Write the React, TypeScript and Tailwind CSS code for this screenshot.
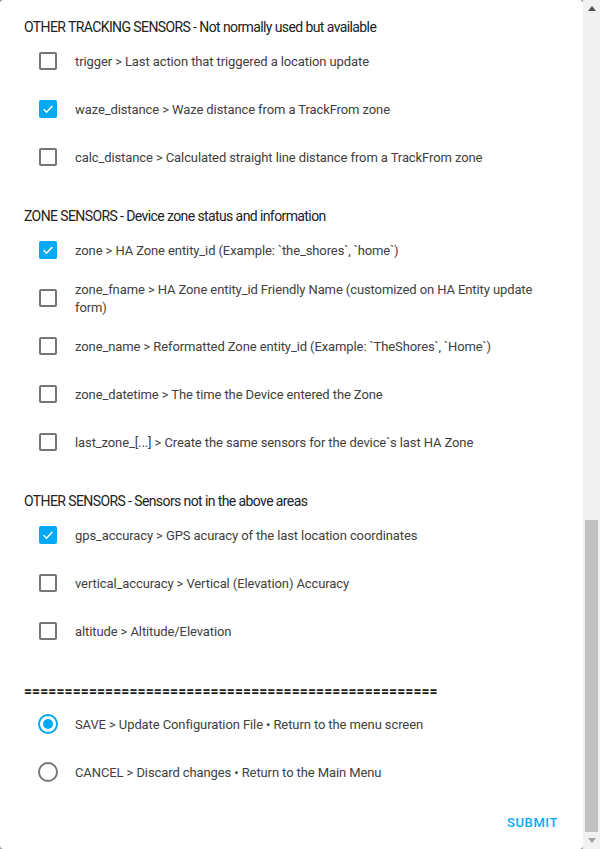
import React from 'react';

type Item = { label: string; checked?: boolean };

const sections: { title: string; items: Item[] }[] = [
  {
    title: 'OTHER TRACKING SENSORS - Not normally used but available',
    items: [
      { label: 'trigger > Last action that triggered a location update' },
      { label: 'waze_distance > Waze distance from a TrackFrom zone', checked: true },
      { label: 'calc_distance > Calculated straight line distance from a TrackFrom zone' },
    ],
  },
  {
    title: 'ZONE SENSORS - Device zone status and information',
    items: [
      { label: 'zone > HA Zone entity_id (Example: `the_shores`, `home`)', checked: true },
      { label: 'zone_fname > HA Zone entity_id Friendly Name (customized on HA Entity update form)' },
      { label: 'zone_name > Reformatted Zone entity_id (Example: `TheShores`, `Home`)' },
      { label: 'zone_datetime > The time the Device entered the Zone' },
      { label: 'last_zone_[...] > Create the same sensors for the device`s last HA Zone' },
    ],
  },
  {
    title: 'OTHER SENSORS - Sensors not in the above areas',
    items: [
      { label: 'gps_accuracy > GPS acuracy of the last location coordinates', checked: true },
      { label: 'vertical_accuracy > Vertical (Elevation) Accuracy' },
      { label: 'altitude > Altitude/Elevation' },
    ],
  },
];

function Checkbox({ checked }: { checked?: boolean }) {
  if (checked) {
    return (
      <span className="flex h-[18px] w-[18px] items-center justify-center rounded-[2px] bg-[#03a9f4]">
        <svg width="14" height="14" viewBox="0 0 24 24" fill="none">
          <path d="M4.5 12.5l5 5L19.5 7" stroke="#fff" strokeWidth="2.6" />
        </svg>
      </span>
    );
  }
  return <span className="block h-[18px] w-[18px] rounded-[2px] border-2 border-[#757575]" />;
}

function Radio({ checked }: { checked?: boolean }) {
  return (
    <span
      className={
        checked
          ? 'flex h-5 w-5 items-center justify-center rounded-full border-2 border-[#03a9f4]'
          : 'flex h-5 w-5 items-center justify-center rounded-full border-2 border-[#757575]'
      }
    >
      {checked && <span className="block h-[10px] w-[10px] rounded-full bg-[#03a9f4]" />}
    </span>
  );
}

function Row({ children, control }: { children: React.ReactNode; control: React.ReactNode }) {
  return (
    <div className="flex min-h-[48px] items-center">
      <div className="flex w-[48px] shrink-0 justify-center">{control}</div>
      <div className="ml-[3px] pr-6 pt-[1px] text-[13px] leading-[18px] tracking-[-0.1px] text-[#404040]">
        {children}
      </div>
    </div>
  );
}

export default function App() {
  return (
    <div
      className="flex h-[849px] w-[600px] bg-[#9e9e9e]"
      style={{ fontFamily: 'Roboto, "Liberation Sans", sans-serif' }}
    >
      <div className="flex flex-1 flex-col rounded-[4px] bg-white">
        <div className="flex flex-1 flex-col pl-6 pr-5 pt-[17px]">
          {sections.map((s) => (
            <div key={s.title} className="mb-[25px]">
              <div className="text-[14px] leading-[20px] tracking-[-0.6px] text-[#212121]">{s.title}</div>
              <div>
                {s.items.map((it) => (
                  <Row key={it.label} control={<Checkbox checked={it.checked} />}>
                    {it.label}
                  </Row>
                ))}
              </div>
            </div>
          ))}
          <div className="mt-[3px] whitespace-nowrap text-[14px] font-bold leading-[16px] tracking-[0.08px] text-[#212121]">
            ===================================================
          </div>
          <div className="mt-[1px]">
            <Row control={<Radio checked />}>SAVE &gt; Update Configuration File • Return to the menu screen</Row>
            <Row control={<Radio />}>CANCEL &gt; Discard changes • Return to the Main Menu</Row>
          </div>
          <div className="mt-[19px] flex justify-end pr-[5px]">
            <span className="text-[13px] font-medium leading-[16px] tracking-[0.6px] text-[#03a9f4]">SUBMIT</span>
          </div>
        </div>
      </div>
      <div className="flex w-[17px] flex-col bg-[#f1f1f1]">
        <div className="flex h-[17px] items-center justify-center">
          <svg width="8" height="5" viewBox="0 0 8 5">
            <path d="M0 5L4 0l4 5z" fill="#505050" />
          </svg>
        </div>
        <div className="flex flex-1 flex-col justify-end px-[2px]">
          <div className="h-[312px] bg-[#c1c1c1]" />
        </div>
        <div className="flex h-[17px] items-center justify-center">
          <svg width="8" height="5" viewBox="0 0 8 5">
            <path d="M0 0l4 5 4-5z" fill="#a3a3a3" />
          </svg>
        </div>
      </div>
    </div>
  );
}
